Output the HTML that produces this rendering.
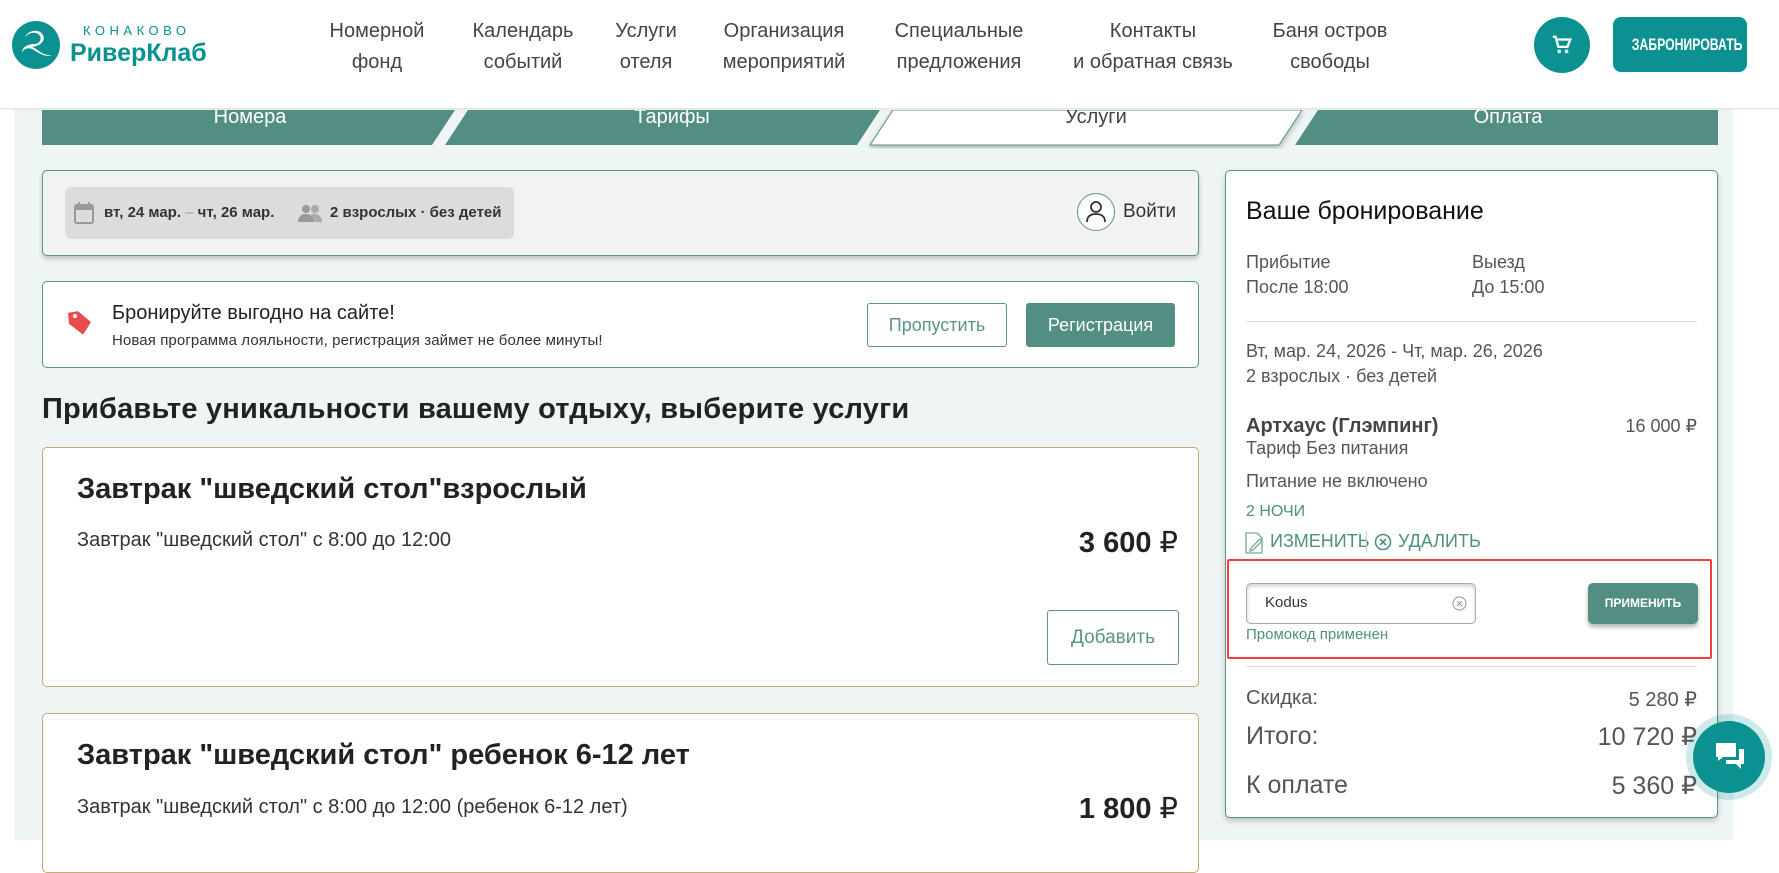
<!DOCTYPE html>
<html><head><meta charset="utf-8"><style>
*{box-sizing:border-box;margin:0;padding:0}
body{width:1779px;height:840px;overflow:hidden;background:#fff;font-family:"Liberation Sans",sans-serif;position:relative;color:#333}
.a{position:absolute;white-space:nowrap}
.nav{position:absolute;top:16px;text-align:center;font-size:20px;line-height:31px;color:#444;transform:translateX(-50%);white-space:nowrap}
.bg{position:absolute;left:14px;top:109px;width:1719px;height:731px;background:#eff5f4}
.card{position:absolute;background:#fff;border:1px solid #5a9487;border-radius:5px}
.c{color:#555}
.tl{color:#4f9080}
</style></head><body>
<div class="bg"></div>
<!-- header -->
<div class="a" style="left:0;top:0;width:1779px;height:109px;background:#fff;border-bottom:1px solid #e4e4e4;box-shadow:0 1px 3px rgba(0,0,0,.05)"></div>
<svg class="a" style="left:11px;top:20px" width="50" height="50" viewBox="0 0 50 50"><circle cx="25" cy="25" r="24" fill="#0a9190"/><path d="M14 18c2-8 14-10 18-3 3 6-3 11-11 12 6 2 10 9 20 8-8 3-14-3-20-6-4-2-9 0-10 4 0-6 6-9 12-9 5 0 8-4 6-8-3-5-12-4-15 2z" fill="#fff"/></svg>
<div class="a" style="left:83px;top:23px;font-size:13px;letter-spacing:4.5px;color:#0a9190">КОНАКОВО</div>
<div class="a" style="left:70px;top:39px;font-size:25px;font-weight:bold;color:#0a9190">РиверКлаб</div>
<div class="nav" style="left:377px">Номерной<br>фонд</div>
<div class="nav" style="left:523px">Календарь<br>событий</div>
<div class="nav" style="left:646px">Услуги<br>отеля</div>
<div class="nav" style="left:784px">Организация<br>мероприятий</div>
<div class="nav" style="left:959px">Специальные<br>предложения</div>
<div class="nav" style="left:1153px">Контакты<br>и обратная связь</div>
<div class="nav" style="left:1330px">Баня остров<br>свободы</div>
<div class="a" style="left:1534px;top:17px;width:56px;height:56px;border-radius:50%;background:#0a9190"></div>
<svg class="a" style="left:1551px;top:34px" width="22" height="22" viewBox="0 0 24 24"><path d="M2 3h3l3 11h10l3-8H7" fill="none" stroke="#fff" stroke-width="2.5"/><circle cx="9" cy="19" r="2" fill="#fff"/><circle cx="17" cy="19" r="2" fill="#fff"/></svg>
<div class="a" style="left:1613px;top:17px;width:134px;height:55px;border-radius:8px;background:#0a9190"></div>
<div class="a" style="left:1613px;top:17px;width:134px;height:55px;color:#fff;font-weight:bold;font-size:17px;line-height:55px;text-align:center;transform:scaleX(0.72)">ЗАБРОНИРОВАТЬ</div>
<!-- steps -->
<svg class="a" style="left:0;top:110px" width="1779" height="40">
<defs><filter id="sh"><feDropShadow dx="0" dy="3" stdDeviation="3" flood-opacity="0.25"/></filter></defs>
<polygon points="42,0 455,0 432,35 42,35" fill="#528f82"/>
<polygon points="468,0 880,0 857,35 445,35" fill="#528f82"/>
<polygon points="893,0 1302,0 1279,35 870,35" fill="#fff" stroke="#528f82" stroke-width="1" filter="url(#sh)"/>
<polygon points="1318,0 1718,0 1718,35 1295,35" fill="#528f82"/>
<text x="250" y="13" fill="#fff" font-size="20" text-anchor="middle" font-family="Liberation Sans">Номера</text>
<text x="672" y="13" fill="#fff" font-size="20" text-anchor="middle" font-family="Liberation Sans">Тарифы</text>
<text x="1096" y="13" fill="#444" font-size="20" text-anchor="middle" font-family="Liberation Sans">Услуги</text>
<text x="1508" y="13" fill="#fff" font-size="20" text-anchor="middle" font-family="Liberation Sans">Оплата</text>
</svg>
<!-- search card -->
<div class="card" style="left:42px;top:170px;width:1157px;height:86px;background:#f2f2f2;box-shadow:0 3px 5px rgba(0,0,0,.2)"></div>
<div class="a" style="left:65px;top:187px;width:449px;height:52px;border-radius:6px;background:#dcdcdc"></div>
<svg class="a" style="left:74px;top:202px" width="20" height="22" viewBox="0 0 20 22"><rect x="1" y="3" width="18" height="18" rx="2" fill="none" stroke="#999" stroke-width="2"/><rect x="1" y="3" width="18" height="5" fill="#999"/><rect x="4" y="0" width="2" height="5" fill="#999"/><rect x="14" y="0" width="2" height="5" fill="#999"/></svg>
<div class="a" style="left:104px;top:204px;font-size:15px;font-weight:bold;color:#333">вт, 24 мар. <span style="color:#999;font-weight:normal">–</span> чт, 26 мар.</div>
<svg class="a" style="left:297px;top:204px" width="26" height="18" viewBox="0 0 26 18"><circle cx="9" cy="5" r="4" fill="#999"/><circle cx="18" cy="5" r="4" fill="#aaa"/><path d="M1 18c0-6 4-8 8-8s8 2 8 8z" fill="#999"/><path d="M14 10c5-1 11 1 11 8h-7z" fill="#aaa"/></svg>
<div class="a" style="left:330px;top:204px;font-size:15px;font-weight:bold;color:#333">2 взрослых · без детей</div>
<div class="a" style="left:1077px;top:193px;width:38px;height:38px;border-radius:50%;border:1.5px solid #5a9487;background:#fff"></div>
<svg class="a" style="left:1085px;top:200px" width="22" height="24" viewBox="0 0 22 24"><circle cx="11" cy="7" r="5" fill="none" stroke="#333" stroke-width="1.8"/><path d="M2 22c0-6 4-8 9-8s9 2 9 8" fill="none" stroke="#333" stroke-width="1.8"/></svg>
<div class="a" style="left:1123px;top:201px;font-size:19px;color:#333">Войти</div>
<!-- promo -->
<div class="card" style="left:42px;top:281px;width:1157px;height:87px"></div>
<svg class="a" style="left:67px;top:309px" width="26" height="28" viewBox="0 0 26 28"><path d="M3 2h10l11 13-10 11L2 13z" fill="#e84c4c" transform="rotate(-10 13 14)"/><circle cx="8" cy="7" r="2" fill="#fff"/></svg>
<div class="a" style="left:112px;top:302px;font-size:20px;color:#222">Бронируйте выгодно на сайте!</div>
<div class="a" style="left:112px;top:332px;font-size:15px;color:#333;letter-spacing:0.1px">Новая программа лояльности, регистрация займет не более минуты!</div>
<div class="a" style="left:867px;top:303px;width:140px;height:44px;border:1px solid #5a9487;border-radius:3px;text-align:center;line-height:42px;font-size:18px;color:#5a9487;background:#fff">Пропустить</div>
<div class="a" style="left:1026px;top:303px;width:149px;height:44px;border-radius:3px;text-align:center;line-height:44px;font-size:18px;color:#fff;background:#528f82">Регистрация</div>
<div class="a" style="left:42px;top:393px;font-size:29px;font-weight:bold;color:#222;letter-spacing:0.2px">Прибавьте уникальности вашему отдыху, выберите услуги</div>
<!-- service cards -->
<div class="card" style="left:42px;top:447px;width:1157px;height:240px;border-color:#c4aa7a"></div>
<div class="a" style="left:77px;top:473px;font-size:29px;font-weight:bold;color:#222">Завтрак "шведский стол"взрослый</div>
<div class="a" style="left:77px;top:529px;font-size:20px;color:#333">Завтрак "шведский стол" с 8:00 до 12:00</div>
<div class="a" style="right:601px;top:525px;font-size:29px;font-weight:bold;color:#222">3 600 <span style="font-weight:normal">₽</span></div>
<div class="a" style="left:1047px;top:610px;width:132px;height:55px;border:1px solid #5a9487;border-radius:3px;text-align:center;line-height:53px;font-size:19px;color:#5a9487;background:#fff">Добавить</div>
<div class="card" style="left:42px;top:713px;width:1157px;height:160px;border-color:#c4aa7a"></div>
<div class="a" style="left:77px;top:739px;font-size:29px;font-weight:bold;color:#222">Завтрак "шведский стол" ребенок 6-12 лет</div>
<div class="a" style="left:77px;top:796px;font-size:20px;color:#333">Завтрак "шведский стол" с 8:00 до 12:00 (ребенок 6-12 лет)</div>
<div class="a" style="right:601px;top:791px;font-size:29px;font-weight:bold;color:#222">1 800 <span style="font-weight:normal">₽</span></div>
<!-- right panel -->
<div class="card" style="left:1225px;top:170px;width:493px;height:648px;box-shadow:0 3px 6px rgba(0,0,0,.2)"></div>
<div class="a" style="left:1246px;top:197px;font-size:25px;color:#111">Ваше бронирование</div>
<div class="a c" style="left:1246px;top:250px;font-size:18px;line-height:25px">Прибытие<br>После 18:00</div>
<div class="a c" style="left:1472px;top:250px;font-size:18px;line-height:25px">Выезд<br>До 15:00</div>
<div class="a" style="left:1246px;top:321px;width:451px;height:1px;background:#ddd"></div>
<div class="a c" style="left:1246px;top:339px;font-size:18px;line-height:25px">Вт, мар. 24, 2026 - Чт, мар. 26, 2026<br>2 взрослых · без детей</div>
<div class="a" style="left:1246px;top:415px;font-size:20px;font-weight:bold;color:#444">Артхаус (Глэмпинг)</div>
<div class="a c" style="right:82px;top:416px;font-size:18px">16 000 ₽</div>
<div class="a c" style="left:1246px;top:438px;font-size:18px">Тариф Без питания</div>
<div class="a c" style="left:1246px;top:471px;font-size:18px">Питание не включено</div>
<div class="a tl" style="left:1246px;top:503px;font-size:16px">2 НОЧИ</div>
<svg class="a" style="left:1245px;top:532px" width="20" height="22" viewBox="0 0 20 22"><path d="M1 1h11l5 5v15H1z" fill="none" stroke="#7aa89c" stroke-width="1.3"/><path d="M6 16l9-9 2 2-9 9-3 1z" fill="none" stroke="#7aa89c" stroke-width="1.3"/></svg>
<div class="a tl" style="left:1270px;top:531px;font-size:18px">ИЗМЕНИТЬ</div>
<div class="a" style="left:1366px;top:531px;width:1px;height:22px;background:#ccc"></div>
<svg class="a" style="left:1374px;top:533px" width="18" height="18" viewBox="0 0 18 18"><circle cx="9" cy="9" r="7.5" fill="none" stroke="#4f9080" stroke-width="1.6"/><path d="M6 6l6 6M12 6l-6 6" stroke="#4f9080" stroke-width="1.6"/></svg>
<div class="a tl" style="left:1398px;top:531px;font-size:18px">УДАЛИТЬ</div>
<div class="a" style="left:1227px;top:559px;width:485px;height:100px;border:2px solid #f0423a;border-radius:2px"></div>
<div class="a" style="left:1246px;top:583px;width:230px;height:41px;border:1px solid #aaa;border-radius:5px;box-shadow:inset 0 2px 4px rgba(0,0,0,.2);background:#fff"></div>
<div class="a" style="left:1265px;top:594px;font-size:15px;color:#333">Kodus</div>
<svg class="a" style="left:1452px;top:596px" width="15" height="15" viewBox="0 0 15 15"><circle cx="7.5" cy="7.5" r="6.5" fill="none" stroke="#999" stroke-width="1"/><path d="M5 5l5 5M10 5l-5 5" stroke="#999" stroke-width="1"/></svg>
<div class="a tl" style="left:1246px;top:626px;font-size:15px">Промокод применен</div>
<div class="a" style="left:1588px;top:583px;width:110px;height:41px;border-radius:5px;background:#528f82;color:#fff;font-size:12px;font-weight:bold;text-align:center;line-height:41px;box-shadow:0 3px 5px rgba(0,0,0,.3)">ПРИМЕНИТЬ</div>
<div class="a" style="left:1246px;top:666px;width:451px;height:1px;background:#ddd"></div>
<div class="a c" style="left:1246px;top:687px;font-size:20px">Скидка:</div>
<div class="a c" style="right:82px;top:687px;font-size:20px">5 280 ₽</div>
<div class="a c" style="left:1246px;top:722px;font-size:25px">Итого:</div>
<div class="a c" style="right:82px;top:722px;font-size:25px">10 720 ₽</div>
<div class="a c" style="left:1246px;top:771px;font-size:25px">К оплате</div>
<div class="a c" style="right:82px;top:771px;font-size:25px">5 360 ₽</div>
<!-- chat -->
<div class="a" style="left:1686px;top:714px;width:86px;height:86px;border-radius:50%;background:rgba(10,145,144,.2)"></div>
<div class="a" style="left:1693px;top:721px;width:72px;height:72px;border-radius:50%;background:#0a9190"></div>
<svg class="a" style="left:1714px;top:741px" width="32" height="32" viewBox="0 0 32 32"><path d="M2 2h20v14H9l-5 4v-4H2z" fill="#fff"/><path d="M25 8h5v15h-3v5l-5-5H12v-4h13z" fill="#fff"/></svg>
</body></html>
